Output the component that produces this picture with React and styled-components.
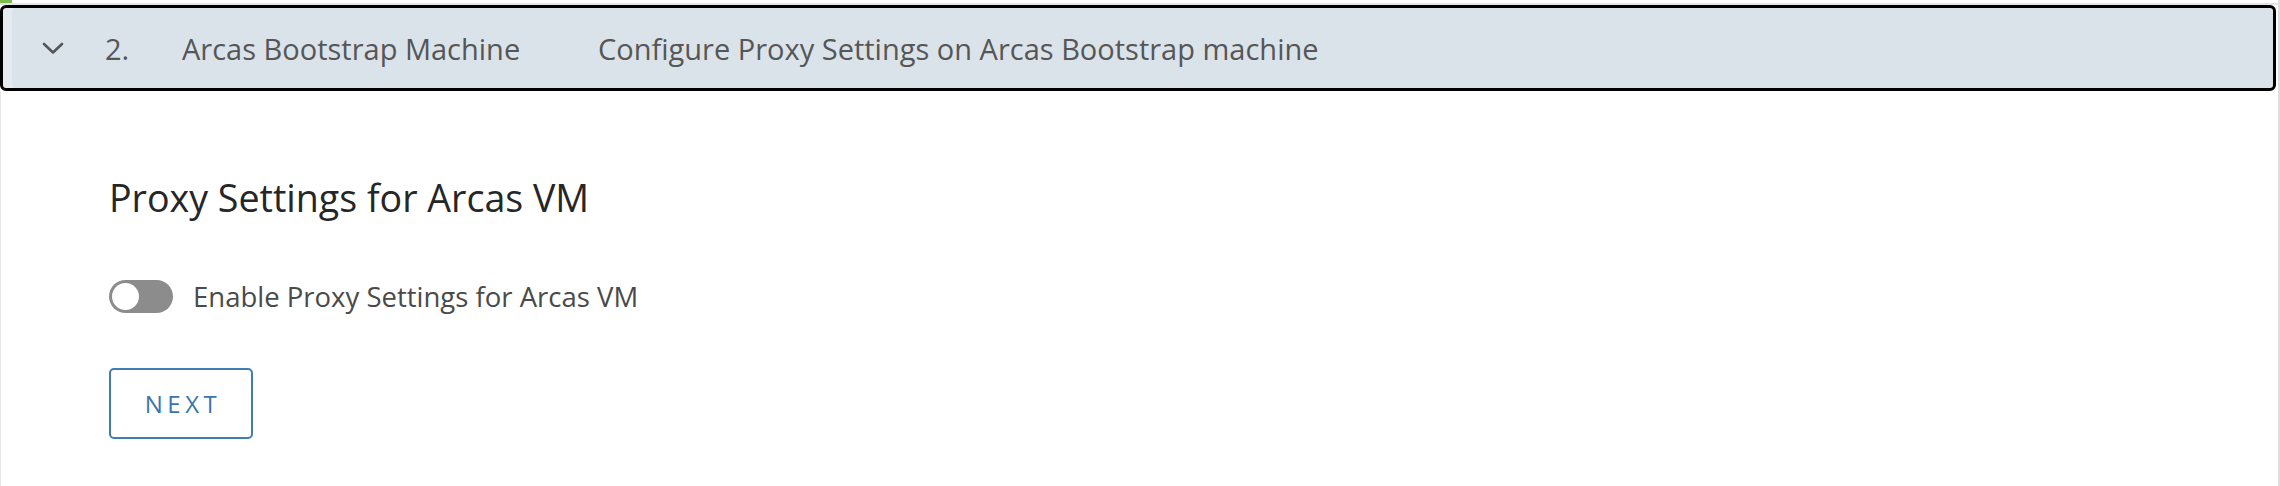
import React, { useState } from 'react';
import styled, { createGlobalStyle } from 'styled-components';

const GlobalStyle = createGlobalStyle`
  html, body {
    margin: 0;
    padding: 0;
    background: #fff;
  }
  body {
    font-family: "Open Sans", "Liberation Sans", sans-serif;
    color: #565656;
  }
`;

const ScPage = styled.div`
  width: 2280px;
  height: 486px;
  box-sizing: border-box;
  border-right: 2px solid #dedede;
  display: flex;
  flex-direction: column;
  overflow: hidden;
`;

const ScTopStrip = styled.div`
  height: 5px;
  display: flex;
  align-items: flex-start;
  box-shadow: inset 0 -2px 0 #e4e4e4;
`;

const ScGreenTab = styled.span`
  width: 12px;
  height: 3px;
  background: #7dbb4c;
`;

const ScHeader = styled.button`
  all: unset;
  box-sizing: border-box;
  width: 2276px;
  height: 86px;
  display: flex;
  align-items: center;
  border: 3px solid #000;
  border-radius: 6px;
  background: #dbe3ea;
  box-shadow: inset 9px 0 0 #e5eaee;
  cursor: pointer;
  font-family: "Open Sans", "Liberation Sans", sans-serif;
  font-size: 29px;
  color: #565656;
`;

const ScChevron = styled.span`
  display: flex;
  width: 102px;
  padding-left: 39px;
  box-sizing: border-box;
  transform: ${({ open }) => (open ? 'none' : 'rotate(-90deg)')};
`;

const ScCell = styled.span`
  width: ${({ w }) => (w ? `${w}px` : 'auto')};
  white-space: nowrap;
`;

const ScBody = styled.div`
  flex: 1;
  border-left: 1px solid #e6e6e6;
  padding: 87px 0 0 108px;
  display: flex;
  flex-direction: column;
  align-items: flex-start;
`;

const ScTitle = styled.h3`
  margin: 0;
  font-weight: 400;
  font-size: 37.6px;
  line-height: 40px;
  color: #262626;
`;

const ScToggleRow = styled.label`
  display: flex;
  align-items: center;
  gap: 20px;
  margin-top: 62px;
  font-size: 27.5px;
  line-height: 33px;
  color: #4a4a4a;
  cursor: pointer;
`;

const ScTrack = styled.span`
  position: relative;
  width: 64px;
  height: 33px;
  border-radius: 17px;
  background: ${({ on }) => (on ? '#3c8500' : '#8c8c8c')};
  flex-shrink: 0;
`;

const ScKnob = styled.span`
  position: absolute;
  top: 3px;
  left: ${({ on }) => (on ? '34px' : '3px')};
  width: 27px;
  height: 27px;
  border-radius: 50%;
  background: #fff;
`;

const ScNextButton = styled.button`
  margin-top: 55px;
  width: 144px;
  height: 71px;
  box-sizing: border-box;
  border: 2px solid #3f7db3;
  border-radius: 5px;
  background: #fff;
  color: #3a76aa;
  font-family: "Open Sans", "Liberation Sans", sans-serif;
  font-size: 24px;
  letter-spacing: 4.5px;
  padding: 0 0 0 4px;
  cursor: pointer;
`;

const App = () => {
  //state
  const [isOpen, setIsOpen] = useState(true);
  const [isProxyOn, setIsProxyOn] = useState(false);

  return (
    <>
      <GlobalStyle />
      <ScPage>
        <ScTopStrip>
          <ScGreenTab />
        </ScTopStrip>

        <ScHeader onClick={() => setIsOpen(!isOpen)}>
          <ScChevron open={isOpen}>
            <svg width='22' height='13' viewBox='0 0 22 13' fill='none'>
              <path d='M2 2 L11 10.5 L20 2' stroke='#565656' strokeWidth='2.6' strokeLinecap='round' strokeLinejoin='round' />
            </svg>
          </ScChevron>
          <ScCell w={77}>2.</ScCell>
          <ScCell w={416}>Arcas Bootstrap Machine</ScCell>
          <ScCell>Configure Proxy Settings on Arcas Bootstrap machine</ScCell>
        </ScHeader>

        {isOpen && (
          <ScBody>
            <ScTitle>Proxy Settings for Arcas VM</ScTitle>

            <ScToggleRow onClick={() => setIsProxyOn(!isProxyOn)}>
              <ScTrack on={isProxyOn}>
                <ScKnob on={isProxyOn} />
              </ScTrack>
              Enable Proxy Settings for Arcas VM
            </ScToggleRow>

            <ScNextButton>NEXT</ScNextButton>
          </ScBody>
        )}
      </ScPage>
    </>
  );
};

export default App;
